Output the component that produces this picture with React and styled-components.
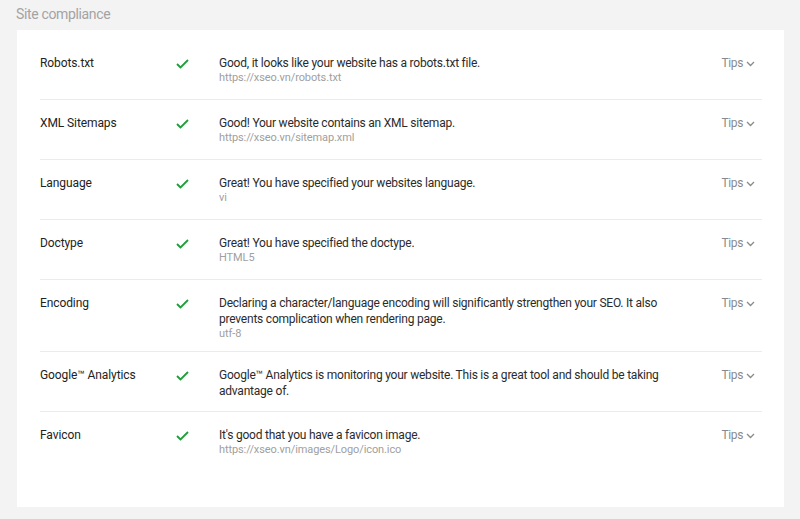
import React from 'react';
import styled, {createGlobalStyle} from 'styled-components';

const checks = [
  {
    name: 'Robots.txt',
    text: 'Good, it looks like your website has a robots.txt file.',
    detail: 'https://xseo.vn/robots.txt',
  },
  {
    name: 'XML Sitemaps',
    text: 'Good! Your website contains an XML sitemap.',
    detail: 'https://xseo.vn/sitemap.xml',
  },
  {
    name: 'Language',
    text: 'Great! You have specified your websites language.',
    detail: 'vi',
  },
  {
    name: 'Doctype',
    text: 'Great! You have specified the doctype.',
    detail: 'HTML5',
  },
  {
    name: 'Encoding',
    text: 'Declaring a character/language encoding will significantly strengthen your SEO. It also prevents complication when rendering page.',
    detail: 'utf-8',
  },
  {
    name: 'Google™ Analytics',
    text: 'Google™ Analytics is monitoring your website. This is a great tool and should be taking advantage of.',
  },
  {
    name: 'Favicon',
    text: "It's good that you have a favicon image.",
    detail: 'https://xseo.vn/images/Logo/icon.ico',
  },
];

const SiteCompliance = () => {
  return (
    <ScPage>
      <GlobalStyle />
      <ScTitle>Site compliance</ScTitle>
      <ScCard>
        {checks.map((item) => (
          <ScRow key={item.name}>
            <ScName>{item.name}</ScName>
            <ScCheck>
              <svg width="13" height="10" viewBox="0 0 13 10">
                <polyline points="1,5 4.5,8.5 12,1" fill="none" stroke="#1f9d3a" strokeWidth="1.8" />
              </svg>
            </ScCheck>
            <ScBody>
              <ScText>{item.text}</ScText>
              {item.detail && <ScDetail>{item.detail}</ScDetail>}
            </ScBody>
            <ScTips>
              Tips
              <svg width="9" height="6" viewBox="0 0 9 6">
                <polyline points="1,1 4.5,4.5 8,1" fill="none" stroke="#8a8a8a" strokeWidth="1.3" />
              </svg>
            </ScTips>
          </ScRow>
        ))}
      </ScCard>
    </ScPage>
  );
};

const GlobalStyle = createGlobalStyle`
  body {
    margin: 0;
    background: #f3f3f3;
    font-family: Roboto, "Liberation Sans", Arial, sans-serif;
  }
`;

const ScPage = styled.div`
  padding: 5px 16px 13px 17px;
`;

const ScTitle = styled.h2`
  margin: 0 0 0 -1px;
  font-size: 14px;
  line-height: 18px;
  font-weight: 400;
  letter-spacing: -0.35px;
  color: #a3a3a3;
  padding-bottom: 7px;
`;

const ScCard = styled.div`
  background: #fff;
  padding: 10px 22px 36px 23px;
`;

const ScRow = styled.div`
  display: grid;
  grid-template-columns: 136px 43px 460px 1fr auto;
  align-items: start;
  min-height: 34px;
  padding: 15px 0 10px;
  border-bottom: 1px solid #ebebeb;

  &:last-child {
    border-bottom: none;
  }
`;

const ScName = styled.div`
  font-size: 12px;
  line-height: 16px;
  letter-spacing: -0.1px;
  color: #222;
`;

const ScCheck = styled.div`
  display: flex;
  align-items: center;
  height: 16px;
  margin-top: 1px;
`;

const ScBody = styled.div`
  grid-column: 3;
`;

const ScText = styled.div`
  font-size: 12px;
  line-height: 16px;
  letter-spacing: -0.22px;
  color: #2b2b2b;
`;

const ScDetail = styled.div`
  font-size: 11px;
  line-height: 14px;
  letter-spacing: -0.1px;
  color: #a0a0a0;
`;

const ScTips = styled.div`
  grid-column: 5;
  display: flex;
  align-items: center;
  gap: 3px;
  margin-right: 7px;
  font-size: 12px;
  line-height: 16px;
  letter-spacing: -0.4px;
  color: #8a8a8a;

  svg {
    margin-top: 2px;
  }
`;

export default SiteCompliance;
